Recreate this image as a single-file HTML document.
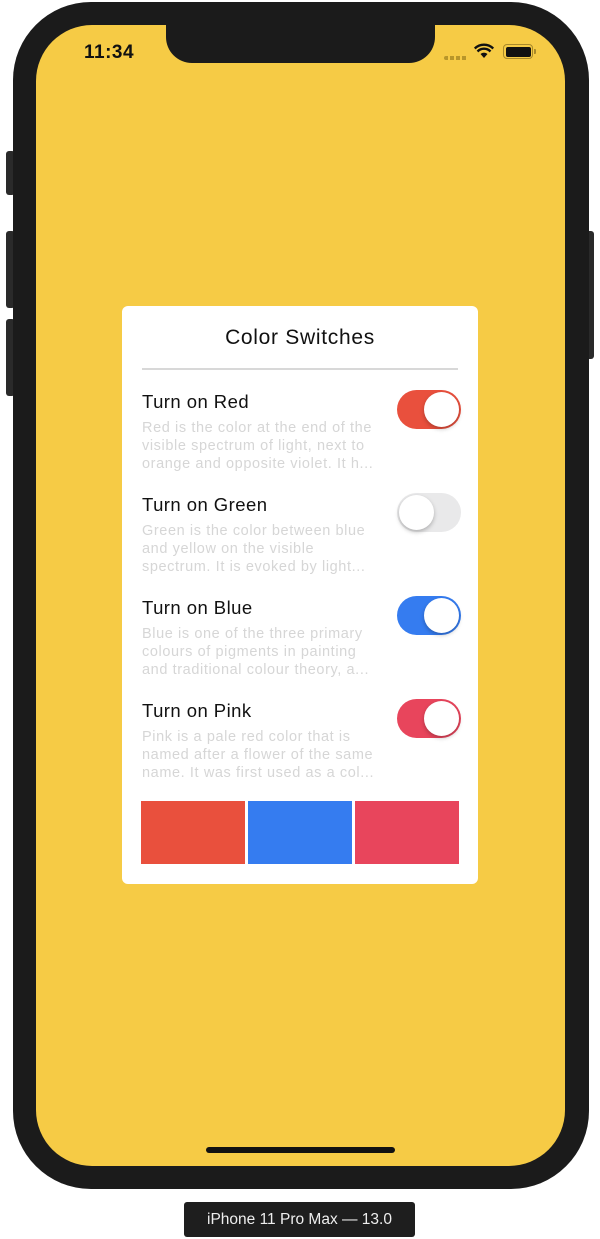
<!DOCTYPE html>
<html><head><meta charset="utf-8"><style>
*{margin:0;padding:0;box-sizing:border-box}
body{width:600px;height:1239px;background:#fff;position:relative;overflow:hidden;font-family:"Liberation Sans",sans-serif}
.abs{position:absolute}
.btn{position:absolute;background:#2a2a2a;border-radius:3px}
.phone{left:13px;top:2px;width:576px;height:1187px;background:#1b1b1b;border-radius:78px}
.screen{left:36px;top:25px;width:529px;height:1141px;background:#f6cb45;border-radius:56px;overflow:hidden}
.notch{left:130px;top:-2px;width:269px;height:40px;background:#1b1b1b;border-radius:0 0 26px 26px}
.card{left:122px;top:306px;width:356px;height:578px;background:#fff;border-radius:6px}
.title{position:absolute;left:0;width:356px;top:20px;text-align:center;font-size:21px;letter-spacing:0.7px;color:#111}
.div{position:absolute;left:20px;width:316px;top:62px;height:2px;background:#d8d8d8}
.h{position:absolute;left:20px;font-size:18.5px;letter-spacing:0.45px;color:#111}
.d{position:absolute;left:20px;width:240px;font-size:14.5px;letter-spacing:0.6px;line-height:18px;color:#d6d6d6;white-space:nowrap}
.tg{position:absolute;left:275px;width:64px;height:39px;border-radius:20px}
.kn{position:absolute;top:2px;width:35px;height:35px;border-radius:50%;background:#fff;box-shadow:0 2px 4px rgba(0,0,0,.25)}
.blk{position:absolute;top:495px;height:63px}
</style></head><body>
<div class="btn" style="left:6px;top:151px;width:9px;height:44px"></div>
<div class="btn" style="left:6px;top:231px;width:9px;height:77px"></div>
<div class="btn" style="left:6px;top:319px;width:9px;height:77px"></div>
<div class="btn" style="left:586px;top:231px;width:8px;height:128px"></div>
<div class="abs phone"></div>
<div class="abs screen">
  <div class="abs notch"></div>
  <div class="abs" style="left:48px;top:17px;font-size:19px;font-weight:bold;letter-spacing:0.5px;color:#111">11:34</div>
  <div class="abs" style="left:408px;top:31px;width:24px;height:4px;background:repeating-linear-gradient(90deg,#b8962a 0 4px,transparent 4px 6px);border-radius:2px"></div>
  <svg class="abs" style="left:438px;top:18px" width="20" height="16" viewBox="0 0 20 16"><path d="M10 15 L6.5 11 A5 5 0 0 1 13.5 11 Z" fill="#111"/><path d="M3.5 8.5 A9 9 0 0 1 16.5 8.5" stroke="#111" stroke-width="2.4" fill="none"/><path d="M0.8 5.5 A13 13 0 0 1 19.2 5.5" stroke="#111" stroke-width="2.4" fill="none"/></svg>
  <div class="abs" style="left:467px;top:19px;width:30px;height:15px;border:1.5px solid #a8892a;border-radius:4px;padding:1.5px"><div style="width:100%;height:100%;background:#111;border-radius:2px"></div></div>
  <div class="abs" style="left:498px;top:24px;width:2px;height:5px;background:#a8892a;border-radius:0 1px 1px 0"></div>
  <div class="abs" style="left:170px;top:1122px;width:189px;height:6px;background:#111;border-radius:3px"></div>
</div>
<div class="abs card">
  <div class="title">Color Switches</div>
  <div class="div"></div>

  <div class="h" style="top:85px">Turn on Red</div>
  <div class="d" style="top:113px">Red is the color at the end of the<br>visible spectrum of light, next to<br>orange and opposite violet. It h...</div>
  <div class="tg" style="top:84px;background:#e9503d"><div class="kn" style="left:27px"></div></div>

  <div class="h" style="top:188px">Turn on Green</div>
  <div class="d" style="top:216px">Green is the color between blue<br>and yellow on the visible<br>spectrum. It is evoked by light...</div>
  <div class="tg" style="top:187px;background:#e9e9ea"><div class="kn" style="left:2px"></div></div>

  <div class="h" style="top:291px">Turn on Blue</div>
  <div class="d" style="top:319px">Blue is one of the three primary<br>colours of pigments in painting<br>and traditional colour theory, a...</div>
  <div class="tg" style="top:290px;background:#357cf0"><div class="kn" style="left:27px"></div></div>

  <div class="h" style="top:394px">Turn on Pink</div>
  <div class="d" style="top:422px">Pink is a pale red color that is<br>named after a flower of the same<br>name. It was first used as a col...</div>
  <div class="tg" style="top:393px;background:#e8455c"><div class="kn" style="left:27px"></div></div>

  <div class="blk" style="left:19px;width:104px;background:#e9503d"></div>
  <div class="blk" style="left:126px;width:104px;background:#357cf0"></div>
  <div class="blk" style="left:233px;width:104px;background:#e8455c"></div>
</div>
<div class="abs" style="left:184px;top:1202px;width:231px;height:35px;background:#1e1e1e;border-radius:3px;color:#eee;font-size:15.5px;text-align:center;line-height:35px">iPhone 11 Pro Max — 13.0</div>
</body></html>
